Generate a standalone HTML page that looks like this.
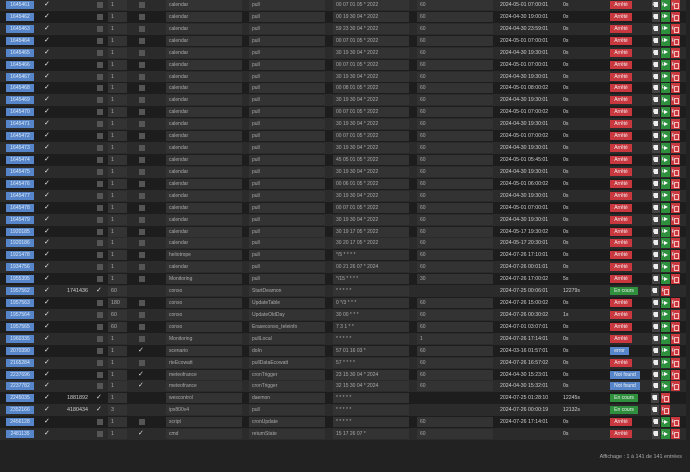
<!DOCTYPE html>
<html><head><meta charset="utf-8"><style>
*{margin:0;padding:0;box-sizing:border-box}
body{width:690px;height:472px;background:#222;overflow:hidden;position:relative;font-family:"Liberation Sans",sans-serif;color:#ccc}
.r{position:absolute;left:0;width:686px;height:11.92px;background:#1d1d1d}
.r.o{background:#2b2b2b}
.r>*{position:absolute;display:block;font-style:normal;text-decoration:none;white-space:nowrap}
.id{left:6px;top:2px;width:28px;height:8px;background:#5686c9;color:#dfe8f5;font-size:5px;line-height:8px;text-align:center;font-weight:normal}
.ck{left:44px;top:1px;font-size:7px;line-height:10px;color:#e8e8e8}
.pid{left:56px;width:32px;text-align:right;top:1px;font-size:5.4px;line-height:10px;color:#ccc}
.cb{left:97px;top:3px;width:6px;height:6px;background:#555}
.ck2{left:96px;top:1px;font-size:7px;line-height:10px;color:#ddd}
.n{left:108px;top:1px;width:19px;height:10px;background:#333;font-size:5.3px;line-height:10px;padding-left:3px;color:#aaa}
.cc{left:139px;top:3px;width:6px;height:6px;background:#555}
.ck3{left:138px;top:1px;font-size:7px;line-height:10px;color:#ddd}
.f{top:1px;height:10px;background:#333;font-size:5px;line-height:10px;padding-left:3px;color:#aaa}
.f1{left:166px;width:76px}.f2{left:249px;width:76px}.f3{left:333px;width:76px}.f4{left:417px;width:76px}
.d{left:500px;top:1px;font-size:5.2px;line-height:10px;color:#d0d0d0}
.du{left:563px;top:1px;font-size:5.2px;line-height:10px;color:#d0d0d0}
.st{top:2px;left:610px;height:8px;font-size:5px;line-height:8px;text-align:center;color:#f0f0f0;font-weight:normal}
.a{width:22px;background:#c9373f}.nf{width:30px;background:#5686c9}.ec{width:28px;background:#2e8f3c}.er{width:19px;background:#5686c9}
.fi{left:652px;top:1px;width:8px;height:10px;background:#444}
.fi::after{content:"";position:absolute;left:2px;top:2px;width:4px;height:5px;background:#eee}
.pl{left:661px;top:1px;width:9px;height:10px;background:#2e8f3c}
.pl::after{content:"";position:absolute;left:3px;top:2.5px;border-left:4px solid #fff;border-top:2.5px solid transparent;border-bottom:2.5px solid transparent}
.tr{left:671px;top:1px;width:9px;height:10px;background:#c9373f}
.tr::after{content:"";position:absolute;left:3px;top:3px;width:3px;height:4px;border:1px solid #f3c0c0;border-top-width:1.5px}
.dm .fi{left:651px}.dm .tr{left:661px}
.foot{position:absolute;right:8px;top:454px;font-size:5.4px;color:#aaa}
</style></head><body>

<div class="r o" style="top:-1px"><b class="id">1645461</b><i class="ck">✓</i><s class="cb"></s><u class="n">1</u><s class="cc"></s><p class="f f1">calendar</p><p class="f f2">pull</p><p class="f f3">00 07 01 05 * 2022</p><p class="f f4">60</p><em class="d">2024-05-01 07:00:01</em><em class="du">0s</em><b class="st a">Arrêté</b><q class="fi"></q><q class="pl"></q><q class="tr"></q></div>
<div class="r" style="top:10.9px"><b class="id">1645462</b><i class="ck">✓</i><s class="cb"></s><u class="n">1</u><s class="cc"></s><p class="f f1">calendar</p><p class="f f2">pull</p><p class="f f3">00 19 30 04 * 2022</p><p class="f f4">60</p><em class="d">2024-04-30 19:00:01</em><em class="du">0s</em><b class="st a">Arrêté</b><q class="fi"></q><q class="pl"></q><q class="tr"></q></div>
<div class="r o" style="top:22.8px"><b class="id">1645463</b><i class="ck">✓</i><s class="cb"></s><u class="n">1</u><s class="cc"></s><p class="f f1">calendar</p><p class="f f2">pull</p><p class="f f3">59 23 30 04 * 2022</p><p class="f f4">60</p><em class="d">2024-04-30 23:59:01</em><em class="du">0s</em><b class="st a">Arrêté</b><q class="fi"></q><q class="pl"></q><q class="tr"></q></div>
<div class="r" style="top:34.8px"><b class="id">1645464</b><i class="ck">✓</i><s class="cb"></s><u class="n">1</u><s class="cc"></s><p class="f f1">calendar</p><p class="f f2">pull</p><p class="f f3">00 07 01 05 * 2022</p><p class="f f4">60</p><em class="d">2024-05-01 07:00:01</em><em class="du">0s</em><b class="st a">Arrêté</b><q class="fi"></q><q class="pl"></q><q class="tr"></q></div>
<div class="r o" style="top:46.7px"><b class="id">1645465</b><i class="ck">✓</i><s class="cb"></s><u class="n">1</u><s class="cc"></s><p class="f f1">calendar</p><p class="f f2">pull</p><p class="f f3">30 19 30 04 * 2022</p><p class="f f4">60</p><em class="d">2024-04-30 19:30:01</em><em class="du">0s</em><b class="st a">Arrêté</b><q class="fi"></q><q class="pl"></q><q class="tr"></q></div>
<div class="r" style="top:58.6px"><b class="id">1645466</b><i class="ck">✓</i><s class="cb"></s><u class="n">1</u><s class="cc"></s><p class="f f1">calendar</p><p class="f f2">pull</p><p class="f f3">00 07 01 05 * 2022</p><p class="f f4">60</p><em class="d">2024-05-01 07:00:01</em><em class="du">0s</em><b class="st a">Arrêté</b><q class="fi"></q><q class="pl"></q><q class="tr"></q></div>
<div class="r o" style="top:70.5px"><b class="id">1645467</b><i class="ck">✓</i><s class="cb"></s><u class="n">1</u><s class="cc"></s><p class="f f1">calendar</p><p class="f f2">pull</p><p class="f f3">30 19 30 04 * 2022</p><p class="f f4">60</p><em class="d">2024-04-30 19:30:01</em><em class="du">0s</em><b class="st a">Arrêté</b><q class="fi"></q><q class="pl"></q><q class="tr"></q></div>
<div class="r" style="top:82.4px"><b class="id">1645468</b><i class="ck">✓</i><s class="cb"></s><u class="n">1</u><s class="cc"></s><p class="f f1">calendar</p><p class="f f2">pull</p><p class="f f3">00 08 01 05 * 2022</p><p class="f f4">60</p><em class="d">2024-05-01 08:00:02</em><em class="du">0s</em><b class="st a">Arrêté</b><q class="fi"></q><q class="pl"></q><q class="tr"></q></div>
<div class="r o" style="top:94.4px"><b class="id">1645469</b><i class="ck">✓</i><s class="cb"></s><u class="n">1</u><s class="cc"></s><p class="f f1">calendar</p><p class="f f2">pull</p><p class="f f3">30 19 30 04 * 2022</p><p class="f f4">60</p><em class="d">2024-04-30 19:30:01</em><em class="du">0s</em><b class="st a">Arrêté</b><q class="fi"></q><q class="pl"></q><q class="tr"></q></div>
<div class="r" style="top:106.3px"><b class="id">1645470</b><i class="ck">✓</i><s class="cb"></s><u class="n">1</u><s class="cc"></s><p class="f f1">calendar</p><p class="f f2">pull</p><p class="f f3">00 07 01 05 * 2022</p><p class="f f4">60</p><em class="d">2024-05-01 07:00:02</em><em class="du">0s</em><b class="st a">Arrêté</b><q class="fi"></q><q class="pl"></q><q class="tr"></q></div>
<div class="r o" style="top:118.2px"><b class="id">1645471</b><i class="ck">✓</i><s class="cb"></s><u class="n">1</u><s class="cc"></s><p class="f f1">calendar</p><p class="f f2">pull</p><p class="f f3">30 19 30 04 * 2022</p><p class="f f4">60</p><em class="d">2024-04-30 19:30:01</em><em class="du">0s</em><b class="st a">Arrêté</b><q class="fi"></q><q class="pl"></q><q class="tr"></q></div>
<div class="r" style="top:130.1px"><b class="id">1645472</b><i class="ck">✓</i><s class="cb"></s><u class="n">1</u><s class="cc"></s><p class="f f1">calendar</p><p class="f f2">pull</p><p class="f f3">00 07 01 05 * 2022</p><p class="f f4">60</p><em class="d">2024-05-01 07:00:02</em><em class="du">0s</em><b class="st a">Arrêté</b><q class="fi"></q><q class="pl"></q><q class="tr"></q></div>
<div class="r o" style="top:142px"><b class="id">1645473</b><i class="ck">✓</i><s class="cb"></s><u class="n">1</u><s class="cc"></s><p class="f f1">calendar</p><p class="f f2">pull</p><p class="f f3">30 19 30 04 * 2022</p><p class="f f4">60</p><em class="d">2024-04-30 19:30:01</em><em class="du">0s</em><b class="st a">Arrêté</b><q class="fi"></q><q class="pl"></q><q class="tr"></q></div>
<div class="r" style="top:154px"><b class="id">1645474</b><i class="ck">✓</i><s class="cb"></s><u class="n">1</u><s class="cc"></s><p class="f f1">calendar</p><p class="f f2">pull</p><p class="f f3">45 05 01 05 * 2022</p><p class="f f4">60</p><em class="d">2024-05-01 05:45:01</em><em class="du">0s</em><b class="st a">Arrêté</b><q class="fi"></q><q class="pl"></q><q class="tr"></q></div>
<div class="r o" style="top:165.9px"><b class="id">1645475</b><i class="ck">✓</i><s class="cb"></s><u class="n">1</u><s class="cc"></s><p class="f f1">calendar</p><p class="f f2">pull</p><p class="f f3">30 19 30 04 * 2022</p><p class="f f4">60</p><em class="d">2024-04-30 19:30:01</em><em class="du">0s</em><b class="st a">Arrêté</b><q class="fi"></q><q class="pl"></q><q class="tr"></q></div>
<div class="r" style="top:177.8px"><b class="id">1645476</b><i class="ck">✓</i><s class="cb"></s><u class="n">1</u><s class="cc"></s><p class="f f1">calendar</p><p class="f f2">pull</p><p class="f f3">00 06 01 05 * 2022</p><p class="f f4">60</p><em class="d">2024-05-01 06:00:02</em><em class="du">0s</em><b class="st a">Arrêté</b><q class="fi"></q><q class="pl"></q><q class="tr"></q></div>
<div class="r o" style="top:189.7px"><b class="id">1645477</b><i class="ck">✓</i><s class="cb"></s><u class="n">1</u><s class="cc"></s><p class="f f1">calendar</p><p class="f f2">pull</p><p class="f f3">30 19 30 04 * 2022</p><p class="f f4">60</p><em class="d">2024-04-30 19:30:01</em><em class="du">0s</em><b class="st a">Arrêté</b><q class="fi"></q><q class="pl"></q><q class="tr"></q></div>
<div class="r" style="top:201.6px"><b class="id">1645478</b><i class="ck">✓</i><s class="cb"></s><u class="n">1</u><s class="cc"></s><p class="f f1">calendar</p><p class="f f2">pull</p><p class="f f3">00 07 01 05 * 2022</p><p class="f f4">60</p><em class="d">2024-05-01 07:00:01</em><em class="du">0s</em><b class="st a">Arrêté</b><q class="fi"></q><q class="pl"></q><q class="tr"></q></div>
<div class="r o" style="top:213.6px"><b class="id">1645479</b><i class="ck">✓</i><s class="cb"></s><u class="n">1</u><s class="cc"></s><p class="f f1">calendar</p><p class="f f2">pull</p><p class="f f3">30 19 30 04 * 2022</p><p class="f f4">60</p><em class="d">2024-04-30 19:30:01</em><em class="du">0s</em><b class="st a">Arrêté</b><q class="fi"></q><q class="pl"></q><q class="tr"></q></div>
<div class="r" style="top:225.5px"><b class="id">1920185</b><i class="ck">✓</i><s class="cb"></s><u class="n">1</u><s class="cc"></s><p class="f f1">calendar</p><p class="f f2">pull</p><p class="f f3">30 19 17 05 * 2022</p><p class="f f4">60</p><em class="d">2024-05-17 19:30:02</em><em class="du">0s</em><b class="st a">Arrêté</b><q class="fi"></q><q class="pl"></q><q class="tr"></q></div>
<div class="r o" style="top:237.4px"><b class="id">1920186</b><i class="ck">✓</i><s class="cb"></s><u class="n">1</u><s class="cc"></s><p class="f f1">calendar</p><p class="f f2">pull</p><p class="f f3">30 20 17 05 * 2022</p><p class="f f4">60</p><em class="d">2024-05-17 20:30:01</em><em class="du">0s</em><b class="st a">Arrêté</b><q class="fi"></q><q class="pl"></q><q class="tr"></q></div>
<div class="r" style="top:249.3px"><b class="id">1921478</b><i class="ck">✓</i><s class="cb"></s><u class="n">1</u><s class="cc"></s><p class="f f1">heliotrope</p><p class="f f2">pull</p><p class="f f3">*/5 * * * *</p><p class="f f4">60</p><em class="d">2024-07-26 17:10:01</em><em class="du">0s</em><b class="st a">Arrêté</b><q class="fi"></q><q class="pl"></q><q class="tr"></q></div>
<div class="r o" style="top:261.2px"><b class="id">1934756</b><i class="ck">✓</i><s class="cb"></s><u class="n">1</u><s class="cc"></s><p class="f f1">calendar</p><p class="f f2">pull</p><p class="f f3">00 21 26 07 * 2024</p><p class="f f4">60</p><em class="d">2024-07-26 00:01:01</em><em class="du">0s</em><b class="st a">Arrêté</b><q class="fi"></q><q class="pl"></q><q class="tr"></q></div>
<div class="r" style="top:273.2px"><b class="id">1955395</b><i class="ck">✓</i><s class="cb"></s><u class="n">1</u><s class="cc"></s><p class="f f1">Monitoring</p><p class="f f2">pull</p><p class="f f3">*/15 * * * *</p><p class="f f4">30</p><em class="d">2024-07-26 17:00:02</em><em class="du">5s</em><b class="st a">Arrêté</b><q class="fi"></q><q class="pl"></q><q class="tr"></q></div>
<div class="r o dm" style="top:285.1px"><b class="id">1957562</b><i class="ck">✓</i><em class="pid">1741436</em><i class="ck2">✓</i><u class="n">60</u><p class="f f1">conso</p><p class="f f2">StartDeamon</p><p class="f f3">* * * * *</p><em class="d">2024-07-25 00:06:01</em><em class="du">12279s</em><b class="st ec">En cours</b><q class="fi"></q><q class="tr"></q></div>
<div class="r" style="top:297px"><b class="id">1957563</b><i class="ck">✓</i><s class="cb"></s><u class="n">180</u><s class="cc"></s><p class="f f1">conso</p><p class="f f2">UpdateTable</p><p class="f f3">0 */3 * * *</p><p class="f f4">60</p><em class="d">2024-07-26 15:00:02</em><em class="du">0s</em><b class="st a">Arrêté</b><q class="fi"></q><q class="pl"></q><q class="tr"></q></div>
<div class="r o" style="top:308.9px"><b class="id">1957564</b><i class="ck">✓</i><s class="cb"></s><u class="n">60</u><s class="cc"></s><p class="f f1">conso</p><p class="f f2">UpdateOldDay</p><p class="f f3">30 00 * * *</p><p class="f f4">60</p><em class="d">2024-07-26 00:30:02</em><em class="du">1s</em><b class="st a">Arrêté</b><q class="fi"></q><q class="pl"></q><q class="tr"></q></div>
<div class="r" style="top:320.8px"><b class="id">1957565</b><i class="ck">✓</i><s class="cb"></s><u class="n">60</u><s class="cc"></s><p class="f f1">conso</p><p class="f f2">Eraseconso_teleinfo</p><p class="f f3">7 3 1 * *</p><p class="f f4">60</p><em class="d">2024-07-01 03:07:01</em><em class="du">0s</em><b class="st a">Arrêté</b><q class="fi"></q><q class="pl"></q><q class="tr"></q></div>
<div class="r o" style="top:332.8px"><b class="id">1960335</b><i class="ck">✓</i><s class="cb"></s><u class="n">1</u><s class="cc"></s><p class="f f1">Monitoring</p><p class="f f2">pullLocal</p><p class="f f3">* * * * *</p><p class="f f4">1</p><em class="d">2024-07-26 17:14:01</em><em class="du">0s</em><b class="st a">Arrêté</b><q class="fi"></q><q class="pl"></q><q class="tr"></q></div>
<div class="r" style="top:344.7px"><b class="id">2070390</b><i class="ck">✓</i><s class="cb"></s><u class="n">1</u><i class="ck3">✓</i><p class="f f1">scenario</p><p class="f f2">doIn</p><p class="f f3">57 01 16 03 *</p><p class="f f4">60</p><em class="d">2024-03-16 01:57:01</em><em class="du">0s</em><b class="st er">error</b><q class="fi"></q><q class="pl"></q><q class="tr"></q></div>
<div class="r o" style="top:356.6px"><b class="id">2165284</b><i class="ck">✓</i><s class="cb"></s><u class="n">1</u><s class="cc"></s><p class="f f1">rteEcowatt</p><p class="f f2">pullDataEcowatt</p><p class="f f3">57 * * * *</p><p class="f f4">60</p><em class="d">2024-07-26 16:57:02</em><em class="du">0s</em><b class="st a">Arrêté</b><q class="fi"></q><q class="pl"></q><q class="tr"></q></div>
<div class="r" style="top:368.5px"><b class="id">2237696</b><i class="ck">✓</i><s class="cb"></s><u class="n">1</u><i class="ck3">✓</i><p class="f f1">meteofrance</p><p class="f f2">cronTrigger</p><p class="f f3">23 15 30 04 * 2024</p><p class="f f4">60</p><em class="d">2024-04-30 15:23:01</em><em class="du">0s</em><b class="st nf">Not found</b><q class="fi"></q><q class="pl"></q><q class="tr"></q></div>
<div class="r o" style="top:380.4px"><b class="id">2237782</b><i class="ck">✓</i><s class="cb"></s><u class="n">1</u><i class="ck3">✓</i><p class="f f1">meteofrance</p><p class="f f2">cronTrigger</p><p class="f f3">32 15 30 04 * 2024</p><p class="f f4">60</p><em class="d">2024-04-30 15:32:01</em><em class="du">0s</em><b class="st nf">Not found</b><q class="fi"></q><q class="pl"></q><q class="tr"></q></div>
<div class="r dm" style="top:392.4px"><b class="id">2245035</b><i class="ck">✓</i><em class="pid">1881892</em><i class="ck2">✓</i><u class="n">1</u><p class="f f1">wescontrol</p><p class="f f2">daemon</p><p class="f f3">* * * * *</p><em class="d">2024-07-25 01:28:10</em><em class="du">12245s</em><b class="st ec">En cours</b><q class="fi"></q><q class="tr"></q></div>
<div class="r o dm" style="top:404.3px"><b class="id">2352166</b><i class="ck">✓</i><em class="pid">4180434</em><i class="ck2">✓</i><u class="n">3</u><p class="f f1">ipx800v4</p><p class="f f2">pull</p><p class="f f3">* * * * *</p><em class="d">2024-07-26 00:00:19</em><em class="du">12132s</em><b class="st ec">En cours</b><q class="fi"></q><q class="tr"></q></div>
<div class="r" style="top:416.2px"><b class="id">2456128</b><i class="ck">✓</i><s class="cb"></s><u class="n">1</u><s class="cc"></s><p class="f f1">script</p><p class="f f2">cronUpdate</p><p class="f f3">* * * * *</p><p class="f f4">60</p><em class="d">2024-07-26 17:14:01</em><em class="du">0s</em><b class="st a">Arrêté</b><q class="fi"></q><q class="pl"></q><q class="tr"></q></div>
<div class="r o" style="top:428.1px"><b class="id">2481135</b><i class="ck">✓</i><s class="cb"></s><u class="n">1</u><i class="ck3">✓</i><p class="f f1">cmd</p><p class="f f2">returnState</p><p class="f f3">15 17 26 07 *</p><p class="f f4">60</p><em class="du">0s</em><b class="st a">Arrêté</b><q class="fi"></q><q class="pl"></q><q class="tr"></q></div>

<div class="foot">Affichage : 1 à 141 de 141 entrées</div>
</body></html>
